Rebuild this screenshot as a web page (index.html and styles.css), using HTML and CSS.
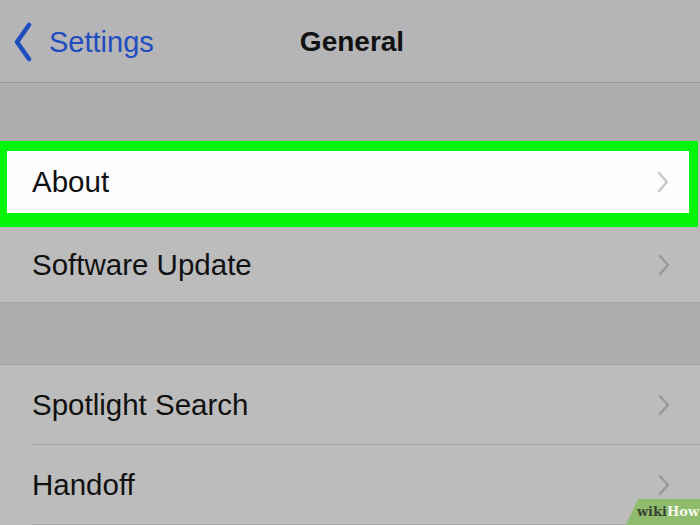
FILE: index.html
```html
<!DOCTYPE html>
<html>
<head>
    <title>General</title>
    <link rel="stylesheet" href="styles.css">
</head>
<body>

    <div class="nav">
        <a class="back" href="#">
            <svg class="back-icon" width="20" height="40" viewBox="0 0 20 40">
                <polyline points="16,3 4,20 16,37" fill="none" stroke="#1f4dbf" stroke-width="4.5" stroke-linecap="round" stroke-linejoin="round"/>
            </svg>
            <span>Settings</span>
        </a>
        <div class="title">General</div>
        <div></div>
    </div>

    <div class="gap gap-top"></div>

    <div class="group">
        <div class="row row-about">
            <span>About</span>
            <svg class="chev" width="12" height="22" viewBox="0 0 12 22"><polyline points="2,2 10,11 2,20"/></svg>
        </div>
        <div class="row row-last">
            <span>Software Update</span>
            <svg class="chev" width="12" height="22" viewBox="0 0 12 22"><polyline points="2,2 10,11 2,20"/></svg>
        </div>
    </div>

    <div class="gap gap-mid"></div>

    <div class="group">
        <div class="row">
            <span>Spotlight Search</span>
            <svg class="chev" width="12" height="22" viewBox="0 0 12 22"><polyline points="2,2 10,11 2,20"/></svg>
        </div>
        <div class="row">
            <span>Handoff</span>
            <svg class="chev" width="12" height="22" viewBox="0 0 12 22"><polyline points="2,2 10,11 2,20"/></svg>
        </div>
        <div class="row row-tail"></div>
    </div>

    <div class="badge"><span class="wiki">wiki</span><span class="how">How</span></div>

</body>
</html>
```

FILE: styles.css
```css
body {
    margin: 0;
    width: 700px;
    height: 525px;
    overflow: hidden;
    background-color: #bcbcbc;
    font-family: "Liberation Sans", Arial, sans-serif;
    position: relative;
}

.nav {
    height: 80px;
    padding-top: 2px;
    display: grid;
    grid-template-columns: 1fr auto 1fr;
    align-items: center;
    background-color: #b5b5b7;
    border-bottom: 1px solid #98989a;
}
.back {
    display: flex;
    align-items: center;
    gap: 16px;
    padding-left: 13px;
    color: #1f4dbf;
    text-decoration: none;
    font-size: 29px;
}
.back-icon {
    display: block;
}
.title {
    font-size: 28px;
    font-weight: bold;
    color: #111;
    padding-left: 4px;
}

.gap {
    background-color: #adadaf;
}
.gap-top {
    height: 58px;
}
.gap-mid {
    height: 61px;
    border-top: 1px solid #a2a2a4;
    border-bottom: 1px solid #a2a2a4;
}

.row {
    display: flex;
    align-items: center;
    justify-content: space-between;
    height: 79px;
    margin-left: 32px;
    padding-right: 30px;
    border-bottom: 1px solid #a6a6a8;
    font-size: 29.5px;
    color: #111;
}
.row-last {
    height: 75px;
    margin-left: 0;
    padding-left: 32px;
    border-bottom: none;
}
.row-tail {
    height: 10px;
    border-bottom: none;
}

.row-about {
    height: 62px;
    margin-left: 0;
    padding-left: 25px;
    padding-right: 20px;
    background-color: #fdfdfd;
    border: solid #05f508;
    border-width: 10px 9px 14px 7px;
    margin-right: 2px;
}

.chev polyline {
    fill: none;
    stroke: #999a9c;
    stroke-width: 2.5;
    stroke-linecap: round;
    stroke-linejoin: round;
}
.row-about .chev polyline {
    stroke: #c7c7cc;
}

.badge {
    position: absolute;
    right: 0;
    bottom: 0;
    width: 74px;
    height: 26px;
    padding-left: 10px;
    box-sizing: border-box;
    background-color: #8fbb6c;
    clip-path: polygon(12px 0, 100% 0, 100% 100%, 0 100%);
    font-family: "DejaVu Serif", "Liberation Serif", serif;
    font-weight: bold;
    font-size: 13px;
    line-height: 26px;
    text-align: center;
}
.wiki {
    color: #3a4433;
}
.how {
    color: #f4f8ee;
}
```
